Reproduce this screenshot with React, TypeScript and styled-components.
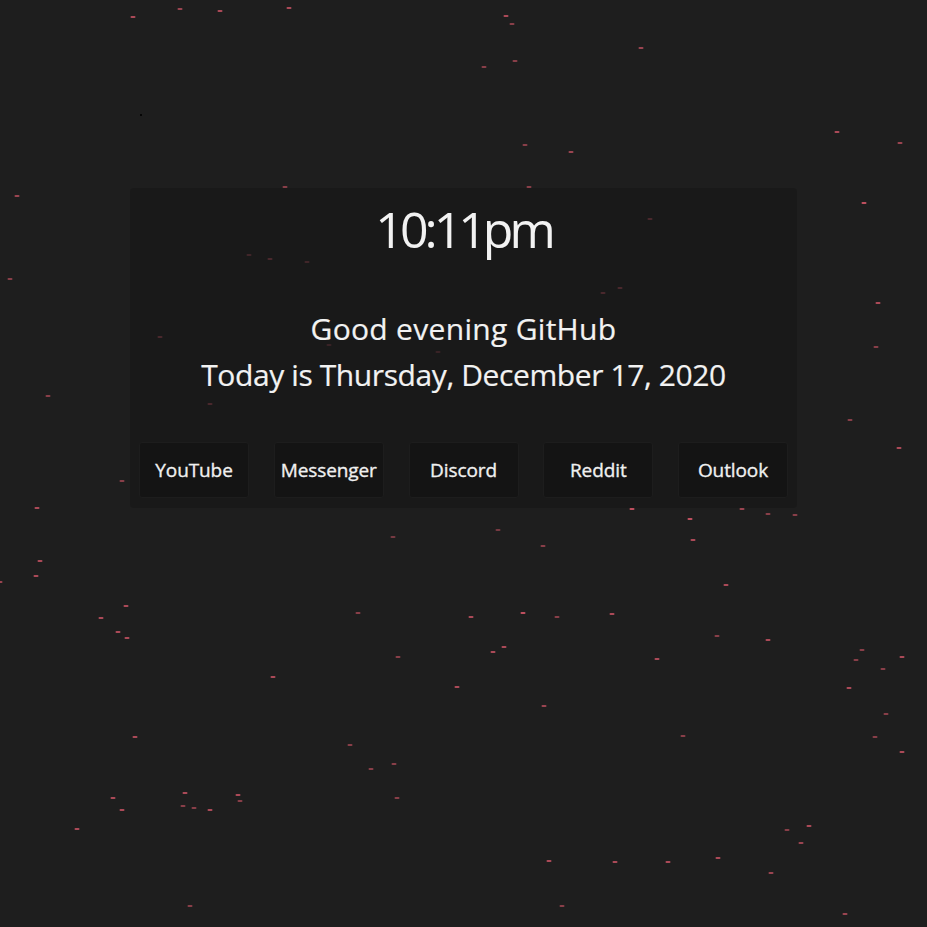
import React from 'react'
import styled, { createGlobalStyle } from 'styled-components'

const GlobalStyle = createGlobalStyle`
	html, body {
		margin: 0;
		padding: 0;
		background: #1e1e1e;
	}
	body {
		font-family: 'Open Sans', 'Noto Sans', sans-serif;
		color: #f2f2f2;
	}
`

// [x, y, opacity]
const drops: [number, number, number][] = [
	[133, 17, 0.8], [180, 9, 0.7], [220, 11, 0.8], [289, 8, 0.8], [506, 16, 0.8],
	[512, 24, 0.6], [484, 67, 0.6], [515, 61, 0.6], [641, 48, 0.7], [525, 145, 0.6],
	[571, 152, 0.7], [837, 132, 0.8], [900, 143, 0.7], [17, 196, 0.7], [285, 187, 0.6],
	[529, 187, 0.6], [864, 203, 0.9], [650, 219, 0.6], [249, 255, 0.5], [270, 259, 0.6],
	[307, 262, 0.5], [10, 279, 0.6], [603, 293, 0.6], [620, 288, 0.6], [878, 303, 0.8],
	[160, 337, 0.6], [329, 345, 0.4], [438, 352, 0.4], [876, 347, 0.6], [48, 396, 0.6],
	[210, 404, 0.6], [850, 420, 0.6], [899, 448, 0.8], [122, 481, 0.6], [37, 508, 0.8],
	[632, 509, 0.9], [690, 519, 0.9], [742, 509, 0.7], [768, 514, 0.6], [795, 515, 0.6],
	[693, 540, 0.8], [393, 537, 0.5], [498, 530, 0.5], [543, 546, 0.6], [40, 561, 0.8],
	[36, 576, 0.8], [0, 582, 0.7], [726, 585, 0.8], [126, 606, 0.8], [101, 618, 0.8],
	[358, 613, 0.6], [471, 617, 0.8], [523, 613, 0.9], [557, 617, 0.6], [612, 614, 0.8],
	[118, 632, 0.8], [127, 638, 0.8], [717, 636, 0.6], [768, 640, 0.8], [862, 650, 0.6],
	[856, 660, 0.6], [902, 657, 0.8], [398, 657, 0.6], [493, 652, 0.8], [504, 647, 0.8],
	[657, 659, 0.8], [273, 677, 0.8], [883, 669, 0.6], [457, 687, 0.8], [849, 688, 0.8],
	[544, 706, 0.7], [886, 714, 0.6], [135, 737, 0.8], [683, 736, 0.6], [875, 737, 0.6],
	[350, 745, 0.6], [902, 752, 0.8], [371, 769, 0.6], [394, 764, 0.6], [238, 795, 0.8],
	[185, 793, 0.8], [183, 806, 0.6], [194, 808, 0.6], [210, 810, 0.8], [240, 801, 0.6],
	[113, 798, 0.8], [122, 810, 0.8], [397, 798, 0.6], [809, 826, 0.8], [77, 829, 0.8],
	[787, 830, 0.6], [801, 843, 0.7], [549, 861, 0.8], [615, 862, 0.8], [668, 862, 0.8],
	[718, 858, 0.8], [771, 873, 0.7], [562, 906, 0.6], [190, 906, 0.6], [845, 914, 0.7],
]

const links = ['YouTube', 'Messenger', 'Discord', 'Reddit', 'Outlook']

export default function App() {
	return (
		<>
			<GlobalStyle />
			<Page>
				<Rain width="927" height="927" viewBox="0 0 927 927">
					{drops.map(([x, y, o], i) => (
						<rect
							key={`drop-${i}`}
							x={x - 2.5}
							y={y - 1}
							width="5"
							height="2"
							rx="1"
							fill="#d05566"
							opacity={o}
						/>
					))}
					<rect x="140" y="114" width="2" height="2" fill="#050505" />
				</Rain>
				<Card>
					<Clock>10:11pm</Clock>
					<Greeting>
						<Line $spacing={0.3}>Good evening GitHub</Line>
						<Line $spacing={-0.4}>Today is Thursday, December 17, 2020</Line>
					</Greeting>
					<LinkRow>
						{links.map(name => (
							<LinkButton key={name}>{name}</LinkButton>
						))}
					</LinkRow>
				</Card>
			</Page>
		</>
	)
}

const Page = styled.div`
	position: relative;
	width: 927px;
	height: 927px;
	overflow: hidden;
	padding-top: 188px;
	box-sizing: border-box;
	display: flex;
	flex-direction: column;
	align-items: center;
`

const Rain = styled.svg`
	position: absolute;
	top: 0;
	left: 0;
	pointer-events: none;
`

const Card = styled.div`
	position: relative;
	width: 667px;
	box-sizing: border-box;
	padding: 0 9px 10px;
	background: rgba(22, 22, 22, 0.55);
	border-radius: 4px;
	display: flex;
	flex-direction: column;
	align-items: center;
`

const Clock = styled.div`
	margin-top: 9px;
	font-size: 50px;
	line-height: 64px;
	font-weight: 400;
	letter-spacing: -4px;
`

const Greeting = styled.div`
	margin-top: 45px;
	display: flex;
	flex-direction: column;
	align-items: center;
`

const Line = styled.div<{ $spacing: number }>`
	font-size: 30px;
	line-height: 46px;
	letter-spacing: ${p => p.$spacing}px;
	-webkit-text-stroke: 0.2px #f2f2f2;
`

const LinkRow = styled.div`
	margin-top: 44px;
	width: 100%;
	display: flex;
	justify-content: space-between;
`

const LinkButton = styled.div`
	width: 110px;
	height: 56px;
	box-sizing: border-box;
	display: flex;
	align-items: center;
	justify-content: center;
	background: #141414;
	border: 1px solid #1d1d1d;
	border-radius: 3px;
	font-size: 19px;
	font-weight: 400;
	-webkit-text-stroke: 0.35px #f0f0f0;
	color: #f0f0f0;
	letter-spacing: -0.1px;
`
